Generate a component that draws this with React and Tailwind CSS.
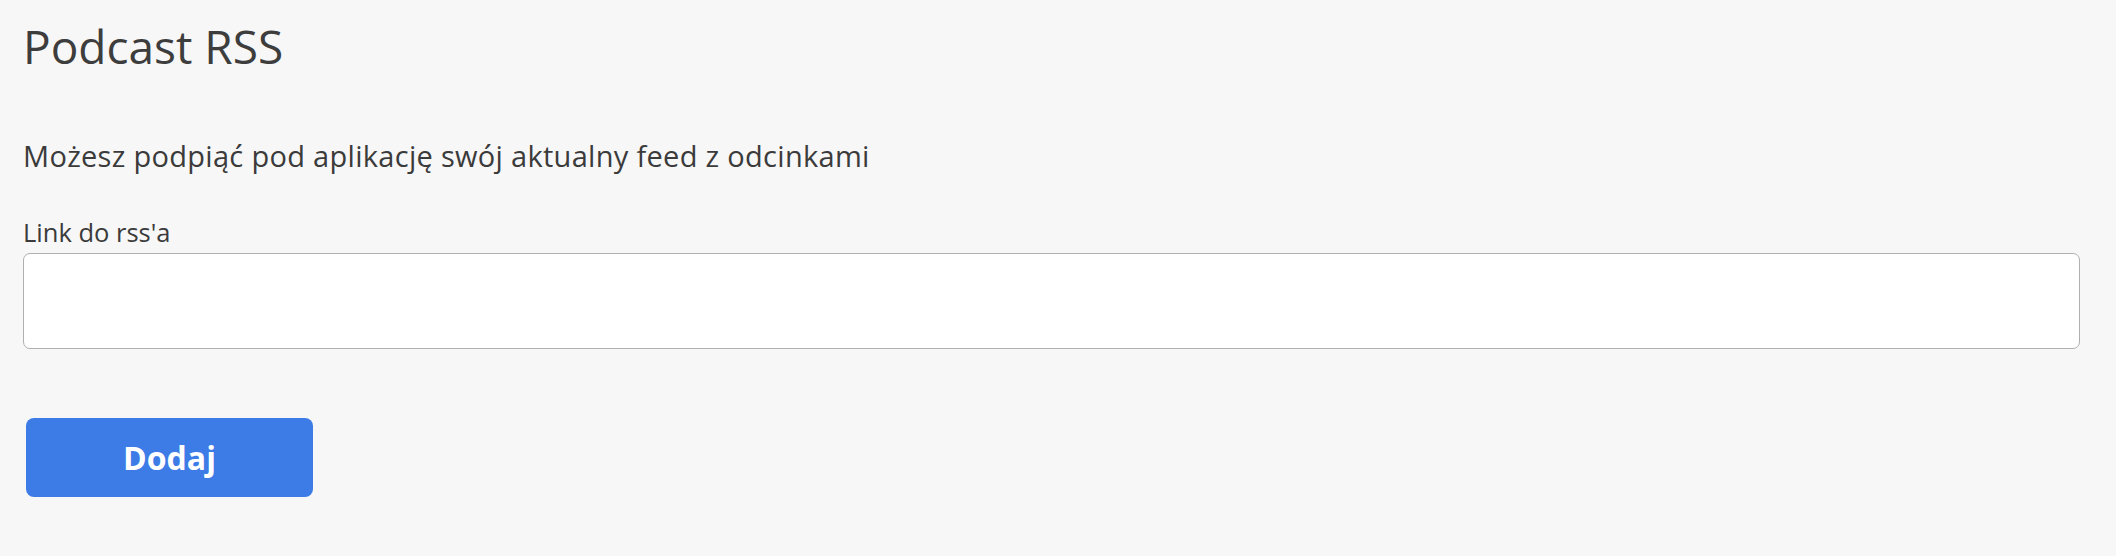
export default function App() {
  return (
    <div className="min-h-[556px] w-full bg-[#f7f7f7] text-[#3b3b3b] font-['Open_Sans',sans-serif]">
      <div className="pl-[23px] pr-[36px] pt-[14px]">
        <h1 className="text-[46px] leading-[64px] font-normal text-[#3d3d3d]">Podcast RSS</h1>
        <p className="mt-[62px] text-[29px] leading-[32px] tracking-[0.3px]">Możesz podpiąć pod aplikację swój aktualny feed z odcinkami</p>
        <label className="mt-[44px] block text-[25.5px] leading-[32px]">Link do rss'a</label>
        <input
          type="text"
          className="mt-[5px] block h-[96px] w-full rounded-[7px] border-[1.5px] border-[#b0b0b0] bg-white px-4 text-[24px] outline-none"
        />
        <button className="ml-[3px] mt-[69px] flex h-[79px] w-[287px] items-center justify-center rounded-[8px] bg-[#3d7be6] text-[32px] font-bold text-white">
          Dodaj
        </button>
      </div>
    </div>
  );
}
